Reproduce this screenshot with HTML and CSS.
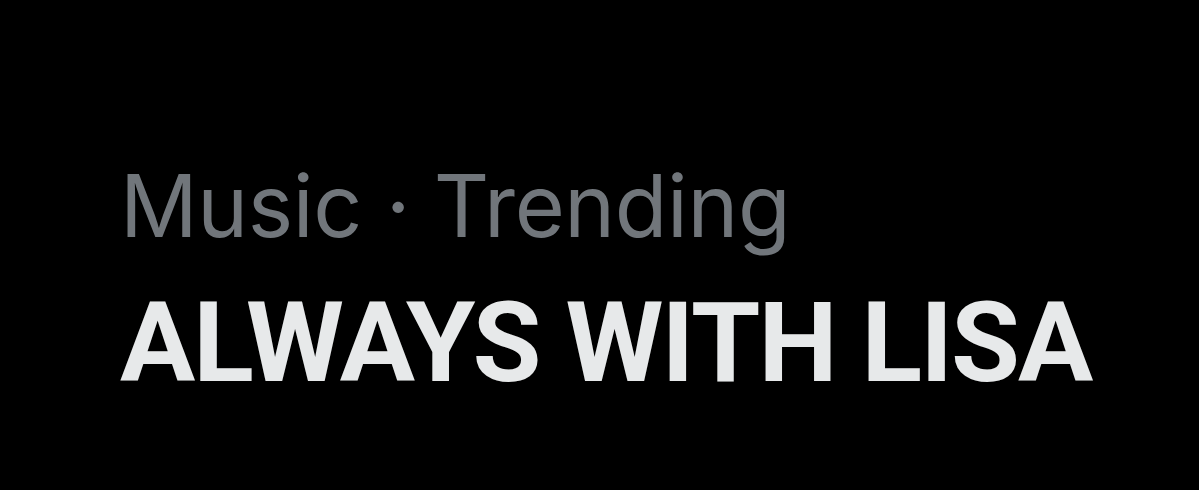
FILE: index.html
```html
<!DOCTYPE html>
<html lang="en">
  <head>
    <meta charset="UTF-8" />
    <meta name="viewport" content="width=device-width, initial-scale=1.0" />
    <title>Trending</title>
    <link rel="stylesheet" href="styles.css">
  </head>
  <body>
    <div class="trend">
      <p class="trend-meta">Music · Trending</p>
      <p class="trend-title">ALWAYS WITH LISA</p>
    </div>
  </body>
</html>
```

FILE: styles.css
```css
* {
  margin: 0;
  padding: 0;
  box-sizing: border-box;
}

html,
body {
  height: 100%;
}

body {
  background: #000;
  font-family: Inter, "Noto Sans", sans-serif;
  overflow: hidden;
}

.trend {
  padding: 154px 0 0 120px;
  display: flex;
  flex-direction: column;
  gap: 25px;
}

.trend-meta {
  color: #71767b;
  font-size: 86px;
  font-weight: 400;
  line-height: 104px;
  letter-spacing: -0.4px;
}

.trend-title {
  color: #e7e9ea;
  font-family: Roboto, Inter, sans-serif;
  font-size: 112px;
  font-weight: 700;
  line-height: 120px;
  letter-spacing: -1.9px;
}
```
